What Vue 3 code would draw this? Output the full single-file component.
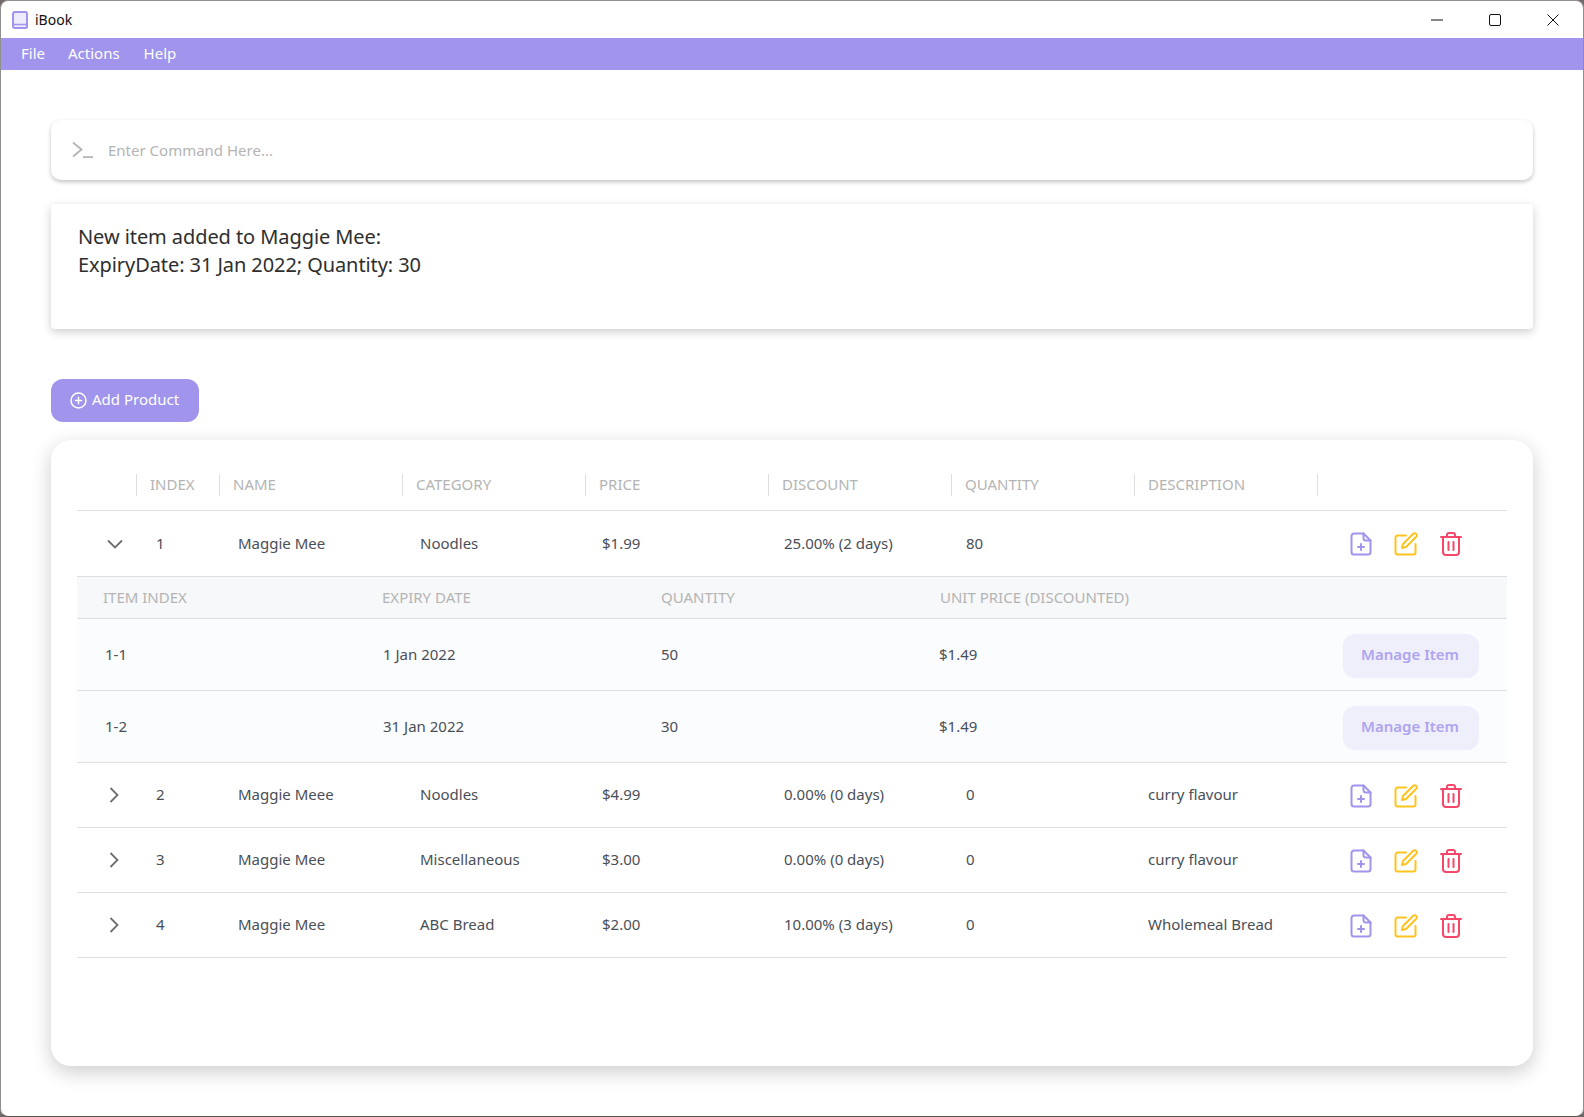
<script setup>
const headers = ['INDEX', 'NAME', 'CATEGORY', 'PRICE', 'DISCOUNT', 'QUANTITY', 'DESCRIPTION']
const after = [
  { i: 2, name: 'Maggie Meee', cat: 'Noodles', price: '$4.99', disc: '0.00% (0 days)', qty: '0', desc: 'curry flavour' },
  { i: 3, name: 'Maggie Mee', cat: 'Miscellaneous', price: '$3.00', disc: '0.00% (0 days)', qty: '0', desc: 'curry flavour' },
  { i: 4, name: 'Maggie Mee', cat: 'ABC Bread', price: '$2.00', disc: '10.00% (3 days)', qty: '0', desc: 'Wholemeal Bread' }
]
const rows = [
  { i: 1, name: 'Maggie Mee', cat: 'Noodles', price: '$1.99', disc: '25.00% (2 days)', qty: '80', desc: '', open: true },
  ...after
]
const items = [
  { id: '1-1', date: '1 Jan 2022', qty: '50', price: '$1.49' },
  { id: '1-2', date: '31 Jan 2022', qty: '30', price: '$1.49' }
]
const subHeaders = ['ITEM INDEX', 'EXPIRY DATE', 'QUANTITY', 'UNIT PRICE (DISCOUNTED)']
</script>

<template>
  <div class="window">
    <header class="titlebar">
      <svg class="logo" width="16" height="18" viewBox="0 0 16 18" fill="none">
        <path d="M3 1h10.500a1.500 1.500 0 0 1 1.500 1.500v13a1.500 1.500 0 0 1-1.500 1.500H3a2 2 0 0 1-2-2V3a2 2 0 0 1 2-2z" fill="#eeebfc" stroke="#a094ec" stroke-width="2"/>
        <path d="M2 13.500h13" stroke="#a094ec" stroke-width="1.500"/>
      </svg>
      <span class="title">iBook</span>
      <div class="controls">
        <svg width="12" height="12" viewBox="0 0 12 12"><path d="M0 6h12" stroke="#111" stroke-width="1"/></svg>
        <svg width="12" height="12" viewBox="0 0 12 12" fill="none"><rect x="0.500" y="0.500" width="11" height="11" rx="1.500" stroke="#111" stroke-width="1"/></svg>
        <svg width="12" height="12" viewBox="0 0 12 12" fill="none"><path d="M0.500 0.500l11 11M11.500 0.500l-11 11" stroke="#111" stroke-width="1"/></svg>
      </div>
    </header>
    <nav class="menubar">
      <span>File</span><span>Actions</span><span class="help">Help</span>
    </nav>
    <main class="content">
      <div class="card command">
        <svg width="21" height="18" viewBox="0 0 21 18" fill="none" stroke="#b4b4b4" stroke-width="1.800">
          <path d="M1 1.500L9.500 8.500L1 15.500"/><path d="M11 16.200h10"/>
        </svg>
        <span class="placeholder">Enter Command Here...</span>
      </div>
      <div class="card message">
        <div>New item added to Maggie Mee:</div>
        <div>ExpiryDate: 31 Jan 2022; Quantity: 30</div>
      </div>
      <button class="add">
        <svg width="17" height="17" viewBox="0 0 17 17" fill="none" stroke="#fff" stroke-width="1.500">
          <circle cx="8.500" cy="8.500" r="7.500"/><path d="M8.500 4.800v7.400M4.800 8.500h7.400"/>
        </svg>
        <span class="addlabel">Add Product</span>
      </button>
      <section class="card tablecard">
        <div class="thead">
          <div></div>
          <div v-for="h in headers" :key="h" class="th">{{ h }}</div>
          <div class="th"></div>
        </div>
        <template v-for="r in rows" :key="r.i">
          <div class="row" :class="{ first: r.open }">
            <div class="chev">
              <svg v-if="r.open" width="16" height="10" viewBox="0 0 16 10" fill="none" stroke="#6e6e6e" stroke-width="1.800"><path d="M1 1.500l7 7 7-7"/></svg>
              <svg v-else class="closed" width="10" height="16" viewBox="0 0 10 16" fill="none" stroke="#6e6e6e" stroke-width="1.800"><path d="M1.500 1l7 7-7 7"/></svg>
            </div>
            <div class="idx cell">{{ r.i }}</div>
            <div class="cell">{{ r.name }}</div>
            <div class="cell">{{ r.cat }}</div>
            <div class="cell">{{ r.price }}</div>
            <div class="cell">{{ r.disc }}</div>
            <div class="cell">{{ r.qty }}</div>
            <div class="cell">{{ r.desc }}</div>
            <div class="acts">
              <svg width="22" height="24" viewBox="0 0 22 24" fill="none" stroke="#a094ec" stroke-width="2" stroke-linejoin="round" stroke-linecap="round">
                <path d="M4 1.500h9.500l7 7V20a2.500 2.500 0 0 1-2.500 2.500H4A2.500 2.500 0 0 1 1.500 20V4A2.500 2.500 0 0 1 4 1.500z"/><path d="M13.500 1.500v4.500a2.500 2.500 0 0 0 2.500 2.500h4.500"/><path d="M11 12v6M8 15h6"/>
              </svg>
              <svg width="24" height="24" viewBox="0 0 24 24" fill="none" stroke="#ffc31f" stroke-width="2" stroke-linejoin="round" stroke-linecap="round">
                <path d="M12 3.500H3.500a2 2 0 0 0-2 2v15a2 2 0 0 0 2 2h16a2 2 0 0 0 2-2V12"/><path d="M19.500 1.500a2.200 2.200 0 0 1 3 3L12 15l-4 1 1-4z"/>
              </svg>
              <svg width="22" height="24" viewBox="0 0 22 24" fill="none" stroke="#f5476a" stroke-width="2" stroke-linejoin="round" stroke-linecap="round">
                <path d="M1 5h20"/><path d="M7 5V3a2 2 0 0 1 2-2h4a2 2 0 0 1 2 2v2"/><path d="M3 5v15a3 3 0 0 0 3 3h10a3 3 0 0 0 3-3V5"/><path d="M8.500 10v8M13.500 10v8"/>
              </svg>
            </div>
          </div>
          <template v-if="r.open">
            <div class="subhead">
              <div v-for="s in subHeaders" :key="s">{{ s }}</div>
            </div>
            <div v-for="it in items" :key="it.id" class="subrow">
              <div class="cell">{{ it.id }}</div>
              <div class="cell">{{ it.date }}</div>
              <div class="cell">{{ it.qty }}</div>
              <div class="cell">{{ it.price }}</div>
              <button class="manage"><span>Manage Item</span></button>
            </div>
          </template>
        </template>
      </section>
    </main>
  </div>
</template>

<style>
html, body { margin: 0; background: #6f6a68; }
</style>

<style scoped>
.window {
  box-sizing: border-box;
  width: 1584px;
  height: 1117px;
  background: #fff;
  border: 1px solid #8f8f8f;
  border-bottom-color: #5a514b;
  border-radius: 8px;
  overflow: hidden;
  font-family: "Noto Sans", sans-serif;
  font-size: 15px;
  color: #4a4f57;
}
.titlebar {
  height: 37px;
  display: flex;
  align-items: center;
  padding-left: 11px;
  color: #111;
  font-size: 14px;
}
.title { margin-left: 7px; }
.controls {
  margin-left: auto;
  padding-right: 24px;
  display: flex;
  gap: 46px;
}
.menubar {
  height: 32px;
  box-sizing: border-box;
  padding: 0 0 2px 20px;
  background: #a094ec;
  color: #fff;
  display: flex;
  align-items: center;
  gap: 23px;
}
.help { margin-left: 1px; }
.content { padding: 50px 50px 0; }
.card {
  background: #fff;
  box-shadow: 0 2px 4px rgba(0, 0, 0, 0.24);
}
.command {
  height: 60px;
  box-sizing: border-box;
  border-radius: 10px;
  display: flex;
  align-items: center;
  padding-left: 21px;
}
.placeholder { margin-left: 15px; color: #b4b4b4; }
.message {
  margin-top: 24px;
  height: 125px;
  box-sizing: border-box;
  padding: 19px 27px;
  border-radius: 4px;
  font-size: 20px;
  line-height: 28px;
  letter-spacing: -0.08px;
  color: #2e2e2e;
  box-shadow: 0 3px 10px rgba(0, 0, 0, 0.2);
}
.add {
  margin-top: 50px;
  display: flex;
  align-items: center;
  gap: 5px;
  width: 148px;
  height: 43px;
  box-sizing: border-box;
  padding: 0 0 0 19px;
  border: 0;
  border-radius: 12px;
  background: #a094ec;
  color: #fff;
  font: inherit;
}
.addlabel { padding-bottom: 3px; }
.tablecard {
  margin-top: 18px;
  height: 626px;
  box-sizing: border-box;
  padding: 26px 26px 0;
  border-radius: 20px;
  box-shadow: 0 6px 20px rgba(0, 0, 0, 0.2);
}
.thead, .row {
  display: grid;
  grid-template-columns: 59px 83px repeat(5, 182px) 188px 1fr;
  align-items: center;
}
.thead {
  grid-template-columns: 59px 83px repeat(6, 183px) 1fr;
  box-sizing: content-box;
  padding-top: 8px;
  height: 36px;
  align-items: flex-start;
  border-bottom: 1px solid #dedede;
  color: #b4b4b4;
}
.th {
  height: 22px;
  line-height: 20px;
  padding-left: 13px;
  border-left: 1px solid #dedede;
}
.row {
  height: 64px;
  border-bottom: 1px solid #dedede;
}
.row.first { height: 65px; }
.cell { padding-bottom: 2px; }
.row > .cell { padding-left: 19px; }
.chev { display: flex; justify-content: center; padding-left: 16px; box-sizing: border-box; }
.closed { margin-left: -1px; }
.row > .idx { padding-left: 20px; }
.acts {
  display: flex;
  gap: 22px;
  align-items: center;
  padding: 1px 0 0 33px;
}
.subhead, .subrow {
  display: grid;
  grid-template-columns: repeat(4, 279px) 1fr;
  align-items: center;
  padding-left: 26px;
}
.subhead {
  padding-bottom: 2px;
  box-sizing: border-box;
  height: 42px;
  background: #f7f8fa;
  border-bottom: 1px solid #dedede;
  color: #b4b4b4;
}
.subrow {
  grid-template-columns: repeat(4, 278px) 1fr;
  height: 71px;
  padding-left: 28px;
  background: #fbfcfe;
  border-bottom: 1px solid #dedede;
}
.manage {
  justify-self: end;
  width: 136px;
  height: 44px;
  margin: 2px 28px 0 0;
  padding: 0 2px 3px 0;
  border: 0;
  border-radius: 12px;
  background: #efeefb;
  color: #aea4f0;
  font: inherit;
  font-weight: 600;
}
</style>
